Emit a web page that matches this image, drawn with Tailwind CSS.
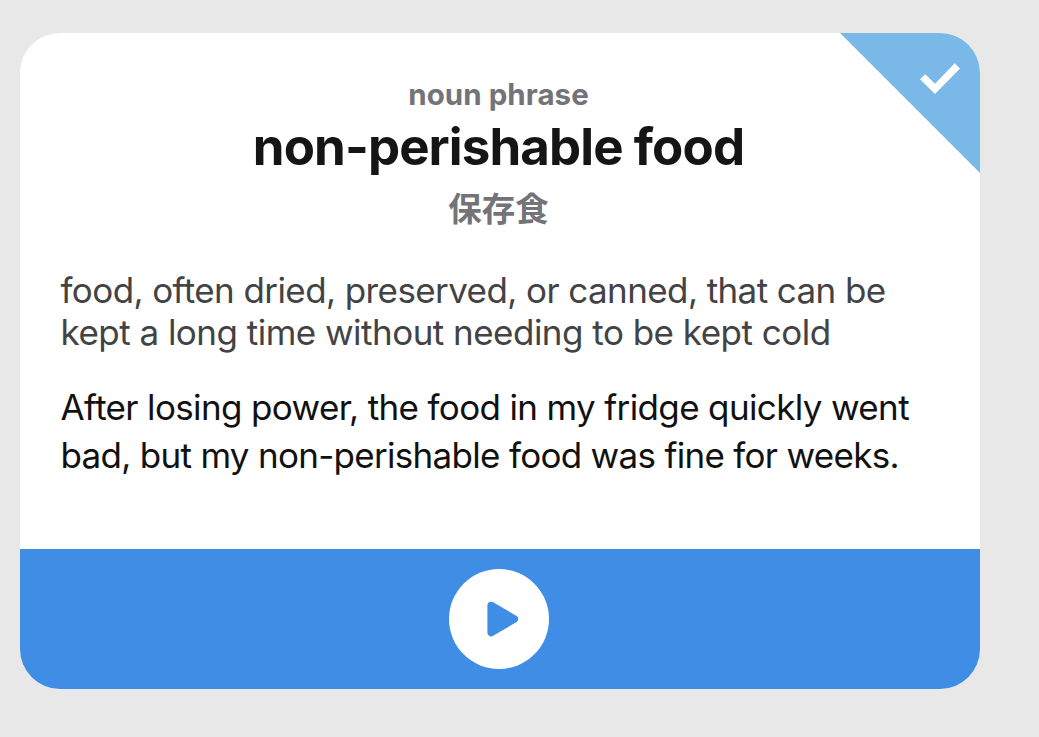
<!DOCTYPE html>
<html lang="en">
<head>
<meta charset="utf-8">
<title>non-perishable food</title>
<script src="https://cdn.jsdelivr.net/npm/@tailwindcss/browser@4"></script>
</head>
<body class="h-screen overflow-hidden bg-[#e8e8e8] px-5 pt-[33px] font-['Inter','Noto_Sans_CJK_JP',sans-serif]">
<main class="relative flex h-[656px] w-[960px] flex-col overflow-hidden rounded-[40px] bg-white">
  <svg class="absolute top-0 right-0 h-[140px] w-[140px]" viewBox="0 0 140 140" aria-hidden="true">
    <path d="M0 0H140V140Z" fill="#79b8e7"/>
    <path d="M80 46.2L85.2 41.2L95 50.8L114.7 30.3L120 35.4L95 61Z" fill="#fff"/>
  </svg>
  <header class="flex flex-col items-center pt-[43px] pr-[3px] whitespace-nowrap">
    <p class="h-[37px] text-[29.5px] leading-9 font-bold tracking-[0.05px] text-[#737378]">noun phrase</p>
    <h1 class="h-[69px] text-[51px] leading-[68px] font-bold tracking-[-0.9px] text-[#151515]">non-perishable food</h1>
    <p class="h-[54px] text-[33.5px] leading-[54px] font-bold text-[#737378]" lang="ja">保存食</p>
  </header>
  <section class="flex flex-1 flex-col gap-[30px] px-[40.5px] pt-[33px] whitespace-nowrap">
    <p class="text-[35px] leading-[42px] text-[#434345]"><span class="tracking-[-0.59px]">food, often dried, preserved, or canned, that can be</span><br><span class="tracking-[-0.52px]">kept a long time without needing to be kept cold</span></p>
    <p class="text-[35px] leading-[48px] text-[#111]"><span class="tracking-[-0.64px]">After losing power, the food in my fridge quickly went</span><br><span class="tracking-[-0.7px]">bad, but my non-perishable food was fine for weeks.</span></p>
  </section>
  <footer class="flex h-[140px] items-center justify-center bg-[#408de5] pr-[2px]">
    <button class="flex size-[100px] items-center justify-center rounded-full bg-white" aria-label="Play">
      <svg class="size-[100px]" viewBox="0 0 100 100" aria-hidden="true"><path d="M42.2 36.5L65.3 50L42.2 63.5Z" fill="#408de5" stroke="#408de5" stroke-width="7.6" stroke-linejoin="round"/></svg>
    </button>
  </footer>
</main>
</body>
</html>
